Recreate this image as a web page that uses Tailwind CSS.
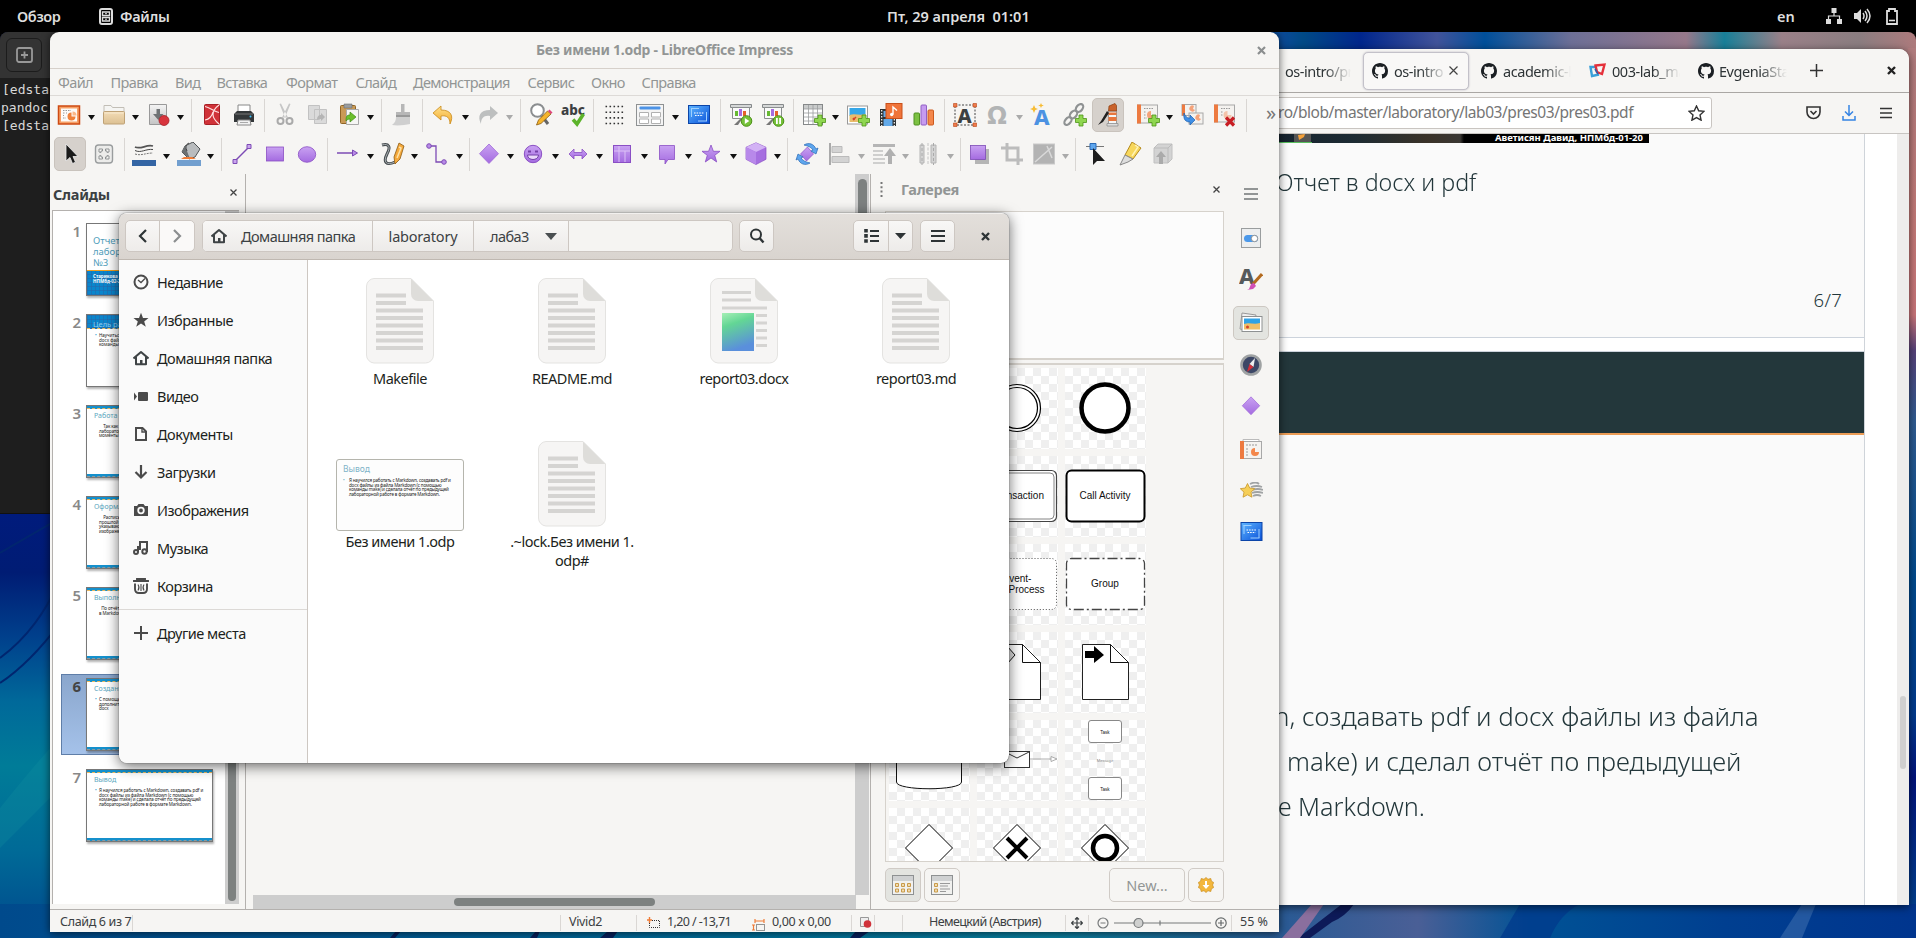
<!DOCTYPE html>
<html lang="ru">
<head>
<meta charset="utf-8">
<title>Desktop</title>
<script src="https://cdn.jsdelivr.net/npm/@tailwindcss/browser@4"></script>
</head>
<body class="relative w-[1916px] h-[938px] overflow-hidden bg-black font-['Noto_Sans',sans-serif] text-[14.5px] leading-none text-[#2e3436] whitespace-nowrap">

<svg class="absolute w-0 h-0">
  <defs>
    <linearGradient id="pu" x2="0" y2="1"><stop stop-color="#c9a2f2"/><stop offset="1" stop-color="#a46be0"/></linearGradient>
    <linearGradient id="ye" x2="0" y2="1"><stop stop-color="#ffe08a"/><stop offset="1" stop-color="#f2a92b"/></linearGradient>
    <linearGradient id="bl" x2="1" y2="1"><stop stop-color="#5db5ff"/><stop offset="1" stop-color="#0a50d8"/></linearGradient>
    <linearGradient id="gr" x2="0" y2="1"><stop stop-color="#f4f4f4"/><stop offset="1" stop-color="#c4c4c4"/></linearGradient>
    <linearGradient id="fo" x2="0" y2="1"><stop stop-color="#f3dcb6"/><stop offset="1" stop-color="#dcc092"/></linearGradient>
    <linearGradient id="doc" x2=".3" y2="1"><stop stop-color="#a5efb5"/><stop offset=".35" stop-color="#63d695"/><stop offset="1" stop-color="#5a8fdc"/></linearGradient>
  </defs>
  <symbol id="new" viewBox="0 0 24 24"><rect x="1.500" y="3" width="21" height="18" fill="#f6a067" stroke="#ce4a12" stroke-width="1.500"/><rect x="4" y="5.500" width="16" height="13" fill="#fdfbf8"/><path d="M6 7.500h8M6 10h2M6 12.500h1M6 15h3M9 10h1" stroke="#999" stroke-width="1.200" stroke-dasharray="1.500 1"/><path d="M14.500 9.500a4 4 0 1 0 4 4h-4z" fill="#f0813a"/><path d="M15.500 8.500v4h4a4 4 0 0 0-4-4z" fill="#fbb888"/></symbol>
  <symbol id="open" viewBox="0 0 24 24"><path d="M2 2.500h7l1.500 2H22v6H2z" fill="#f5f5f3" stroke="#c2beb6"/><rect x="1.500" y="8.500" width="21" height="12.500" rx="1" fill="url(#fo)" stroke="#bfa276"/><path d="M2.500 10h19" stroke="#f8ead0"/></symbol>
  <symbol id="save" viewBox="0 0 24 24"><path d="M3.500 1.500h17v20h-17z" fill="url(#gr)" stroke="#999"/><path d="M10.500 6h3.500v5h3.500l-5.200 6L7 11h3.500z" fill="#6f7375"/><circle cx="18" cy="17.500" r="5" fill="#d8343c" stroke="#a81f28" stroke-width=".8"/></symbol>
  <symbol id="pdf" viewBox="0 0 24 24"><rect x="4.500" y="1.500" width="15" height="20" rx="1" fill="#d03238" stroke="#a82026"/><path d="M5 3.500c5 1 9 5 14 6M19 2c-4 3-6 6-6 9.500s3 7 6 9.500M5 17c5-1 7-4 8-8" fill="none" stroke="#ffe3e3" stroke-width="1.100"/></symbol>
  <symbol id="print" viewBox="0 0 24 24"><path d="M6 2h12v8H6z" fill="#fff" stroke="#888"/><path d="M2 11l3-3h14l3 3v8H2z" fill="#333739"/><path d="M3 11h18" stroke="#777"/><circle cx="18.500" cy="13.500" r="1" fill="#3cc5ff"/><path d="M6 17h12l1 5H5z" fill="#f2f2f2" stroke="#888"/><path d="M8 19.500h8" stroke="#aaa"/></symbol>
  <symbol id="cut" viewBox="0 0 24 24"><path d="M6.500 1l1.500-.500 7 14h-3zM17.500 1L16 .5 9 14.500h3z" fill="#c6c6c6"/><circle cx="7.500" cy="18" r="3" fill="none" stroke="#aaa" stroke-width="2"/><circle cx="16.500" cy="18" r="3" fill="none" stroke="#aaa" stroke-width="2"/></symbol>
  <symbol id="copy" viewBox="0 0 24 24"><path d="M3.500 2.500h11v14h-11zM9.500 6.500h12v14h-12z" fill="#dadada" stroke="#c2c2c2"/><path d="M12 17c0-4 2-5 4-5v-2l4 4-4 4v-2c-2 0-3 0-4 1z" fill="#b5b5b5"/></symbol>
  <symbol id="paste" viewBox="0 0 24 24"><rect x="3.500" y="2.500" width="15" height="18" rx="1" fill="#c99a55" stroke="#8f6426"/><path d="M7 1h8v4H7z" fill="#999c9e" stroke="#6d7072" stroke-width=".6"/><path d="M9.500 6.500h12v15h-12z" fill="#f6f6f4" stroke="#a9a9a9"/><path d="M9 18c0-5 1-6 4-6V9l6 5-6 5v-3c-2 0-3 1-4 2z" fill="#6cc02c" stroke="#3f8c12" stroke-width=".7"/></symbol>
  <symbol id="brush" viewBox="0 0 24 24"><path d="M11 1h3.500v8H11zM6 9h14v5H6z" fill="#b7b7b7"/><path d="M6 14h14v7c-5 1-12 2-18 1 3-2 4-5 4-8z" fill="#cfcfcf"/><path d="M6 13h14" stroke="#8f8f8f" stroke-width="1.500"/></symbol>
  <symbol id="undo" viewBox="0 0 24 24"><path d="M10 3L2 10l8 7v-4c6-1 9 2 9 8 4-8 1-14-9-14z" fill="url(#ye)" stroke="#c98a1a" stroke-width=".8"/></symbol>
  <symbol id="redo" viewBox="0 0 24 24"><path d="M14 3l8 7-8 7v-4c-6-1-9 2-9 8-4-8-1-14 9-14z" fill="#bdbfbf"/></symbol>
  <symbol id="find" viewBox="0 0 24 24"><circle cx="8.500" cy="7.500" r="6.300" fill="#fff" stroke="#8b8e90" stroke-width="2"/><path d="M13 13l6 8" stroke="#666" stroke-width="3"/><path d="M7.500 22l2-5 9-9 3.500 3-10 9.500z" fill="#f5b42c" stroke="#8a5a10" stroke-width=".8"/><path d="M19 8l1.500-1.500 3 3-1.500 1.500z" fill="#e0457c"/></symbol>
  <symbol id="spell" viewBox="0 0 24 24"><text x="0" y="12" font-size="13.500" font-weight="800" font-family="Noto Sans" fill="#3c4042" textLength="24" lengthAdjust="spacingAndGlyphs">abc</text><path d="M12 16.500l4 4.500L22.500 11" fill="none" stroke="#5cb32a" stroke-width="3.500"/></symbol>
  <symbol id="dots" viewBox="0 0 24 24"><path d="M3.500 3.500h18M3.500 9.200h18M3.500 14.900h18M3.500 20.500h18" stroke="#333" stroke-width="1.600" stroke-dasharray="1.600 2.400"/></symbol>
  <symbol id="view" viewBox="0 0 30 24"><rect x="1.500" y="1.500" width="27" height="21" fill="#f4f4f4" stroke="#8e9192"/><rect x="4.500" y="3.500" width="21" height="3" rx="1" fill="#4c93e6"/><path d="M4.500 9.500h9v4.500h-9zM16.500 9.500h9v4.500h-9zM4.500 16h9v4.500h-9zM16.500 16h9v4.500h-9z" fill="#fff" stroke="#b0b0b0"/></symbol>
  <symbol id="master" viewBox="0 0 24 24"><rect x="1.500" y="2.500" width="21" height="18" fill="url(#bl)" stroke="#0c45a8"/><path d="M4 5.500h8M4.500 5v9M20 18h-9M19.500 18V9" stroke="#9fd1ff" fill="none"/><path d="M7 10h10M8 12.500h8" stroke="#fff" stroke-width="1.200" stroke-dasharray="1.600 1"/></symbol>
  <symbol id="play" viewBox="0 0 24 24"><path d="M1.500 1.500h21v3h-21z" fill="#d5d7d7" stroke="#85888a"/><path d="M3.500 4.500h17v11h-17z" fill="#fafafa" stroke="#8b8e8f"/><path d="M6 8h3v5H6z" fill="#67b933"/><path d="M10 6h3v7h-3z" fill="#a56de0"/><path d="M14 8h3v5h-3z" fill="#e5622b"/><path d="M11 16l-6 6h4l4-6z" fill="#777"/><circle cx="17.500" cy="18" r="5.300" fill="#75c138" stroke="#4b9017"/><path d="M15.800 15v6l4.500-3z" fill="#fff"/></symbol>
  <symbol id="pause" viewBox="0 0 24 24"><path d="M1.500 1.500h21v3h-21z" fill="#d5d7d7" stroke="#85888a"/><path d="M3.500 4.500h17v11h-17z" fill="#fafafa" stroke="#8b8e8f"/><path d="M6 8h3v5H6z" fill="#67b933"/><path d="M10 6h3v7h-3z" fill="#a56de0"/><path d="M14 8h3v5h-3z" fill="#e5622b"/><path d="M11 16l-6 6h4l4-6z" fill="#777"/><circle cx="17.500" cy="18" r="5.300" fill="#75c138" stroke="#4b9017"/><path d="M15 15h1.800v6H15zM18.200 15H20v6h-1.800z" fill="#fff"/></symbol>
  <symbol id="plus" viewBox="0 0 24 24"><path d="M16 12h4v3.500h3.500v4H20V23h-4v-3.500h-3.500v-4H16z" fill="#8fd650" stroke="#4c9416" stroke-width=".8"/></symbol>
  <symbol id="table" viewBox="0 0 24 24"><rect x="1.500" y="1.500" width="19" height="20" fill="#fff" stroke="#858889"/><path d="M2 2h18v4H2z" fill="#c9cbcb"/><path d="M2 6h18M2 10h18M2 14h18M2 18h18M6.500 2v19M11 2v19M15.500 2v19" stroke="#9a9d9e" stroke-width=".8"/><use href="#plus"/></symbol>
  <symbol id="image" viewBox="0 0 24 24"><rect x="1.500" y="3" width="20" height="18" fill="#fff" stroke="#999"/><path d="M3.500 5h16v8h-16z" fill="#35a7e8"/><path d="M3.500 12c5-2 10 1 16-1v8h-16z" fill="#e9bd6b"/><path d="M7 15l1.500 2M10 14l-3 3" stroke="#d4432a" stroke-width="1.500"/><use href="#plus"/></symbol>
  <symbol id="media" viewBox="0 0 24 24"><path d="M1 6h16v17H1z" fill="#2e3234"/><path d="M4.500 8h9v6h-9zM4.500 16h9v7h-9z" fill="#62a9e8"/><path d="M2.700 7v16M15.300 7v16" stroke="#fff" stroke-width="1.200" stroke-dasharray="1.500 1.500"/><rect x="7" y=".5" width="16" height="15" fill="#f0743a" stroke="#c9501b"/><path d="M14 11.500V4l4 3.500" stroke="#fff" fill="none" stroke-width="1.400"/><circle cx="12.700" cy="11.500" r="1.700" fill="#fff"/></symbol>
  <symbol id="chart" viewBox="0 0 24 24"><rect x="2" y="10" width="5.500" height="12" rx="1" fill="#7cc142" stroke="#4f9020"/><rect x="9" y="2" width="5.500" height="20" rx="1" fill="#c69bf0" stroke="#9160c4"/><rect x="16" y="7" width="5.500" height="15" rx="1" fill="#f4874b" stroke="#cc5a1f"/></symbol>
  <symbol id="textbox" viewBox="0 0 24 24"><rect x="2" y="2" width="20" height="20" fill="none" stroke="#444" stroke-dasharray="2 1.500"/><text x="4.500" y="19.500" font-size="20" font-weight="800" font-family="Noto Sans" fill="#3c4042">A</text><path d="M.5.500h3.500v3.500H.5zM20 .5h3.500v3.500H20zM.5 20h3.500v3.500H.5zM20 20h3.500v3.500H20z" fill="#ef7c4c" stroke="#b84417" stroke-width=".6"/></symbol>
  <symbol id="omega" viewBox="0 0 24 24"><text x="2" y="21" font-size="25" font-weight="800" font-family="Noto Sans" fill="#b2b4b5" textLength="20" lengthAdjust="spacingAndGlyphs">Ω</text></symbol>
  <symbol id="fontwork" viewBox="0 0 24 24"><text x="4" y="21.500" font-size="22" font-weight="800" font-family="Noto Sans" fill="#4c92e2">A</text><path d="M4 2l1.300 3L8 6 5.300 7 4 10 2.700 7 0 6l2.700-1zM11 0l.8 1.800 2 .7-2 .7L11 5l-.8-1.800-2-.7 2-.7z" fill="#f7bc34"/></symbol>
  <symbol id="link" viewBox="0 0 24 24"><g fill="none" stroke="#8f9293" stroke-width="2.200"><ellipse cx="16.500" cy="5" rx="3" ry="4.500" transform="rotate(40 16.500 5)"/><ellipse cx="10.500" cy="11.500" rx="3" ry="4.500" transform="rotate(40 10.500 11.500)"/><ellipse cx="5" cy="18" rx="2.800" ry="4.500" transform="rotate(40 5 18)"/></g><use href="#plus"/></symbol>
  <symbol id="draw" viewBox="0 0 24 24"><path d="M12.500 8h8v13h-8z" fill="#f5f5f5" stroke="#9a9a9a"/><path d="M12.500 9.500h8V12h-8zM12.500 14h8v4h-8z" fill="#e8763c"/><path d="M13 3l6-2.500 1.500 2V8h-8z" fill="#c9622c" stroke="#8a3d10" stroke-width=".7"/><path d="M11 8l-6 10-3 4 5-3 6-9z" fill="#222"/><path d="M11 20.500h11V23H11z" fill="#ddd" stroke="#888" stroke-width=".7"/></symbol>
  <symbol id="newslide" viewBox="0 0 24 24"><rect x="1.500" y="2" width="20" height="18" fill="#f4f2ef" stroke="#a8a8a8"/><path d="M1 1.500h4v19H1z" fill="#ed7a40"/><path d="M8 5.500h10M8 9h2M8 12h2M8 15h3" stroke="#999" stroke-dasharray="1.500 1"/><path d="M15 8a4 4 0 1 0 4 4h-4z" fill="#f4a27a"/><use href="#plus"/></symbol>
  <symbol id="dup" viewBox="0 0 24 24"><rect x="2" y="1.500" width="14" height="11" fill="#f4f2ef" stroke="#a8a8a8"/><path d="M2 1.500h3v11H2z" fill="#ed7a40"/><rect x="9" y="10" width="14" height="11" fill="#f4f2ef" stroke="#a8a8a8"/><path d="M14 3a3 3 0 1 0 1 4l-2-1zM20 12a3 3 0 1 0 1 4l-2-1z" fill="#f4a27a"/><path d="M4 10c-1 7 2 9 6 9v3l5-5-5-5v3c-2 0-4 0-6-5z" fill="#3f8fe6" stroke="#1d5fae" stroke-width=".7"/></symbol>
  <symbol id="del" viewBox="0 0 24 24"><rect x="1.500" y="2" width="20" height="17" fill="#f4f2ef" stroke="#a8a8a8"/><path d="M1 1.500h4v18H1z" fill="#ed7a40"/><path d="M8 5.500h10M8 9h2M8 12h2" stroke="#999" stroke-dasharray="1.500 1"/><path d="M14.500 8a4 4 0 1 0 4 4h-4z" fill="#f4c4aa"/><path d="M13 14.500l8 8M21 14.500l-8 8" stroke="#c81e24" stroke-width="3.200"/></symbol>
  <symbol id="pointer" viewBox="0 0 24 24"><path d="M8 2v17l4-3.500 2.500 6 3-1.300L15 14.500h5z" fill="#1a1a1a" stroke="#eee" stroke-width=".8"/></symbol>
  <symbol id="fit" viewBox="0 0 24 24"><rect x="3.500" y="3" width="17" height="18" rx="3" fill="#ececea" stroke="#9a9d9e" stroke-width="1.400"/><path d="M7 10V7h3.500v2H9v1.500zM17 10V7h-3.500v2H15v1.500zM7 14v3h3.500v-2H9v-1.500zM17 14v3h-3.500v-2H15v-1.500z" fill="#f6f6f4" stroke="#8f9293" stroke-width="1"/></symbol>
  <symbol id="lines" viewBox="0 0 24 24"><path d="M3 5c6 3 11-3 18-1" stroke="#555" fill="none" stroke-width="1.800"/><path d="M3 8.500c6 3 11-2 18-1" stroke="#444" fill="none" stroke-width="1"/><path d="M3 12c6 2 11-1 18-1" stroke="#777" fill="none" stroke-dasharray="2 1"/><path d="M0 18h24v6H0z" fill="#3465a4"/></symbol>
  <symbol id="fill" viewBox="0 0 24 24"><path d="M8 4l8-4 7 7-5 8-6 2-7-7z" fill="#b9bcbe" stroke="#4f5355"/><path d="M8 4l5 13-8-7z" fill="#6b6f71"/><path d="M12 1q-5 2-2 8" stroke="#444" fill="none"/><path d="M5 9l2 6h8l4 2H4l3-2z" fill="#ef7c37"/><path d="M0 18h24v6H0z" fill="#729fcf"/></symbol>
  <symbol id="line" viewBox="0 0 24 24"><path d="M4 20L20 4" stroke="#7d4bb5" stroke-width="1.400"/><path d="M3 17.500h4v4H3zM17 2.500h4v4h-4z" fill="#caa5ee" stroke="#7d4bb5"/></symbol>
  <symbol id="rect" viewBox="0 0 24 24"><rect x="3.500" y="5" width="17" height="14" fill="url(#pu)" stroke="#8a4fc4" stroke-width=".8"/></symbol>
  <symbol id="ell" viewBox="0 0 24 24"><ellipse cx="12" cy="12.500" rx="8.700" ry="7.800" fill="url(#pu)" stroke="#8a4fc4" stroke-width=".8"/></symbol>
  <symbol id="arrowl" viewBox="0 0 24 24"><path d="M1 11h16" stroke="#7d4bb5" stroke-width="1.400"/><path d="M16.500 8l5 3-5 3z" fill="#b98be8" stroke="#7d4bb5"/></symbol>
  <symbol id="curve" viewBox="0 0 24 24"><path d="M1 3c7-2 9 2 5 9-4 8-1 12 8 8" fill="none" stroke="#454b4e" stroke-width="3"/><path d="M1 3c7-2 9 2 5 9-4 8-1 12 8 8" fill="none" stroke="#aab0b3" stroke-width="1"/><path d="M14 22l-1-7 5-14 5 3-4 13z" fill="#f5a93b" stroke="#8c5a14" stroke-width=".8"/><path d="M18 5l2 1-4 10" stroke="#fde1a6" fill="none" stroke-width="1.500"/></symbol>
  <symbol id="conn" viewBox="0 0 24 24"><path d="M4 4h7v16h8" stroke="#7d4bb5" fill="none" stroke-width="1.300"/><circle cx="4" cy="4" r="2.300" fill="#b98be8" stroke="#7d4bb5"/><circle cx="19" cy="20" r="2.300" fill="#b98be8" stroke="#7d4bb5"/></symbol>
  <symbol id="dia" viewBox="0 0 24 24"><path d="M12 2L21.500 11.700 12 21.500 2.500 11.700z" fill="url(#pu)" stroke="#a06ad8" stroke-width=".8"/></symbol>
  <symbol id="smile" viewBox="0 0 24 24"><circle cx="12" cy="12" r="8.700" fill="url(#pu)" stroke="#8a4fc4"/><path d="M7 8.500h3v2H7zM14 8.500h3v2h-3z" fill="#7440a8"/><path d="M6.500 13h11c0 6-11 6-11 0z" fill="#e9d8fa" stroke="#7440a8"/></symbol>
  <symbol id="dbl" viewBox="0 0 24 24"><path d="M3 12l5-5v3.500h8V7l5 5-5 5v-3.500H8V17z" fill="url(#pu)" stroke="#8a4fc4" stroke-width=".8"/></symbol>
  <symbol id="flow" viewBox="0 0 24 24"><rect x="3.500" y="3.500" width="17" height="17" fill="url(#pu)" stroke="#8a4fc4"/><path d="M9 4v16M4 9h16M15 9v11" stroke="#dcc2f6"/></symbol>
  <symbol id="call" viewBox="0 0 24 24"><path d="M4.500 3.500h15v14H13l-3 4.500v-4.500H4.500z" fill="url(#pu)" stroke="#8a4fc4" stroke-width=".8"/></symbol>
  <symbol id="star" viewBox="0 0 24 24"><path d="M12 3l2.400 6.300h6.600l-5.300 4 2 6.700L12 16l-5.700 4 2-6.700-5.300-4h6.600z" fill="url(#pu)" stroke="#8a4fc4" stroke-width=".8"/></symbol>
  <symbol id="cube" viewBox="0 0 24 24"><path d="M12 .8l10 4.500v12L12 22.500 2 17.300v-12z" fill="#a66fe0" stroke="#8a4fc4" stroke-width=".7"/><path d="M12 .8l10 4.500L12 10 2 5.300z" fill="#d3b2f5"/><path d="M12 10v12.500L2 17.300v-12z" fill="#b889ea"/></symbol>
  <symbol id="rot" viewBox="0 0 24 24"><path d="M12.500 5l6 7-7 7-6-7z" fill="url(#pu)" stroke="#8a4fc4" stroke-width=".7"/><path d="M9 3c5-3 10-1 12 4l2-1-2 6-5-3 2-1c-2-3-5-4-9-5zM15 21c-5 3-10 1-12-4l-2 1 2-6 5 3-2 1c2 3 5 4 9 5z" fill="#5ea6ee" stroke="#2a6ab6" stroke-width=".7"/></symbol>
  <symbol id="align" viewBox="0 0 24 24"><path d="M3 1v22" stroke="#aaa" stroke-width="2"/><path d="M5 4.500h10v6H5zM5 14.500h17v6H5z" fill="#d3d3d3" stroke="#bbb"/></symbol>
  <symbol id="arr2" viewBox="0 0 24 24"><path d="M1 2h22v3H1z" fill="#b5b5b5"/><path d="M1 9h10M1 13h10M1 17h12M1 21h12" stroke="#c2c2c2" stroke-width="1.600"/><path d="M18 6l6 8h-4v8h-4v-8h-4z" fill="#b0b0b0"/></symbol>
  <symbol id="dist" viewBox="0 0 24 24"><path d="M12 1v22" stroke="#c4c4c4" stroke-dasharray="3 1.500"/><path d="M4 3h4v18H4zM15 3h5v18h-5z" fill="#d3d3d3" stroke="#b5b5b5"/><path d="M6 1v22M17.500 1v22" stroke="#aaa" stroke-dasharray="3 2"/></symbol>
  <symbol id="shadow" viewBox="0 0 24 24"><path d="M7 7h14v15H7z" fill="#b5b5b5"/><rect x="2.500" y="3.500" width="15" height="14" fill="url(#pu)" stroke="#7d4bb5" stroke-width=".8"/></symbol>
  <symbol id="crop" viewBox="0 0 24 24"><path d="M7 1v17h16M1 6h17v17" fill="none" stroke="#bcbcbc" stroke-width="3"/></symbol>
  <symbol id="filter" viewBox="0 0 24 24"><rect x="1.500" y="2" width="21" height="20" fill="#b3b3b3" stroke="#c9c9c9"/><path d="M3 20L20 5M15 4l5 12" stroke="#d9d9d9" stroke-width="1.500"/></symbol>
  <symbol id="points" viewBox="0 0 24 24"><path d="M2 4.500h18" stroke="#777" stroke-width="1.200"/><path d="M6 1.500h6v6H6z" fill="#5ea6ee" stroke="#2a6ab6"/><path d="M9 6v17l4-4h8z" fill="#1d1d1d"/></symbol>
  <symbol id="glue" viewBox="0 0 24 24"><path d="M14 0l9 6-8 11-8-4z" fill="#f7d75c" stroke="#b58a1d"/><path d="M17 3l3 2-6 9" stroke="#fff2b4" fill="none" stroke-width="1.500"/><path d="M7 13l8 4-5 3-8 3z" fill="#ddd" stroke="#888"/></symbol>
  <symbol id="extr" viewBox="0 0 24 24"><path d="M3 6l4-4h14v15l-4 4H3z" fill="#d3d3d3" stroke="#c0c0c0"/><path d="M3 6h14v15M17 6l4-4" fill="none" stroke="#bbb"/><path d="M10 9l5 6h-3v7H8v-7H5z" fill="#aaa"/></symbol>

  <symbol id="git" viewBox="0 0 16 16"><path d="M8 0C3.580 0 0 3.580 0 8c0 3.540 2.290 6.530 5.470 7.590.4.070.55-.17.55-.38 0-.19-.01-.82-.01-1.490-2.010.37-2.530-.49-2.690-.94-.09-.23-.48-.94-.82-1.130-.28-.15-.68-.52-.01-.53.63-.01 1.080.58 1.230.82.72 1.210 1.870.87 2.330.66.070-.52.28-.87.51-1.070-1.780-.2-3.640-.89-3.640-3.950 0-.87.31-1.590.82-2.150-.08-.2-.36-1.020.08-2.120 0 0 .67-.21 2.200.82.64-.18 1.320-.27 2-.27s1.360.09 2 .27c1.530-1.040 2.200-.82 2.200-.82.44 1.100.16 1.920.08 2.120.51.56.82 1.270.82 2.150 0 3.070-1.870 3.750-3.650 3.950.29.25.54.73.54 1.480 0 1.070-.01 1.930-.01 2.200 0 .21.15.46.55.38A8.010 8.010 0 0 0 16 8c0-4.420-3.580-8-8-8z" fill="#1b1f23"/></symbol>
  <symbol id="file" viewBox="0 0 68 86"><path d="M8 .5h37L67.500 23v54a8 8 0 0 1-8 8H8a8 8 0 0 1-7.500-8V8A8 8 0 0 1 8 .5z" fill="#f6f5f4" stroke="#e4e3e1"/><path d="M45 .5L67.500 23H52a7 7 0 0 1-7-7z" fill="#deddda"/></symbol>
  <symbol id="txt" viewBox="0 0 68 86"><use href="#file"/><path d="M10 17.500h30M10 25h30M10 32.500h47M10 40h47M10 47.500h47M10 55h47M10 62.500h47M10 70h47" stroke="#d5d4d2" stroke-width="4"/></symbol>
  <symbol id="home" viewBox="0 0 16 16"><path d="M.5 8.500L8 2l7.500 6.500M3 7v7.200h10V7" fill="none" stroke="#3e4345" stroke-width="2" stroke-linejoin="round"/><path d="M7 10h2.500v4H7z" fill="#3e4345"/></symbol>
</svg>

<!-- wallpaper -->
<div class="absolute inset-x-0 top-8 bottom-0 rounded-t-lg bg-[linear-gradient(90deg,#00186f_0%,#005a96_30%,#0a4a96_67%,#004a86_68%,#00268c_71%,#41539a_75%,#004f9a_77.5%,#6d6f96_82%,#96788a_88%,#187f98_90%,#9a8088_93%,#8a7d80_97%,#ad7a7c_100%)] overflow-hidden">
  <svg class="absolute left-0 bottom-0" width="60" height="430"><defs><linearGradient id="lw" x2="0" y2="1"><stop stop-color="#001b7d"/><stop offset=".15" stop-color="#001c74"/><stop offset=".3" stop-color="#00408c"/><stop offset=".45" stop-color="#00699a"/><stop offset=".6" stop-color="#007c98"/><stop offset=".8" stop-color="#006a97"/><stop offset="1" stop-color="#00488c"/></linearGradient></defs><rect width="60" height="430" fill="url(#lw)"/><path d="M0 150Q40 120 60 70M0 175Q30 155 60 115M0 45L60 10" stroke="#00266f" fill="none" stroke-width="2"/><path d="M0 300Q40 250 60 230v50Q30 310 0 340z" fill="#1090a0" opacity=".3"/></svg>
  <div class="absolute right-0 top-4 bottom-0 w-2 bg-[linear-gradient(180deg,#b07c7e_0%,#c47a78_20%,#c9757a_30%,#56427a_34%,#2f5c92_42%,#004a8e_60%,#003a8e_75%,#00137c_82%,#004a93_100%)]"></div>
  <svg class="absolute left-0 bottom-0" width="1916" height="34"><defs><linearGradient id="bw"><stop stop-color="#004a8c"/><stop offset=".2" stop-color="#005a94"/><stop offset=".4" stop-color="#00709a"/><stop offset=".55" stop-color="#0a7f9e"/><stop offset=".67" stop-color="#2a5a94"/><stop offset=".74" stop-color="#4a5f96"/><stop offset=".8" stop-color="#005295"/><stop offset=".9" stop-color="#003f90"/><stop offset="1" stop-color="#00358e"/></linearGradient></defs><rect width="1916" height="34" fill="url(#bw)"/><path d="M1342 0h12q-8 12-22 18l-22 16h-12z" fill="#0d1a58"/><path d="M1282 34l30-34h12l-24 34z" fill="#8a6f9e"/><path d="M1500 34l20-34h60q-20 10-30 34z" fill="#00388c" opacity=".7"/><path d="M1780 34l22-34h14l-14 34z" fill="#3a6cae" opacity=".6"/><path d="M390 34l6-7h5l-6 7zM530 34l6-7h4l-3 7zM850 34l6-7h14l-10 7zM600 34l8-7h10l-5 7z" fill="#07205c"/></svg>
</div>

<!-- top panel -->
<header class="absolute inset-x-0 top-0 h-8 bg-black text-[#dedede] font-semibold text-[14.5px] flex items-center">
  <span class="ml-[17px] w-[44px] tracking-[-0.350px]">Обзор</span>
  <svg class="ml-[38px] mr-[7px]" width="14" height="17" viewBox="0 0 14 17"><rect x="1" y="1" width="12" height="15" rx="2" fill="none" stroke="#ddd" stroke-width="2"/><path d="M3.500 4h7v3.500h-7zM3.500 9.500h7V13h-7z" fill="none" stroke="#ddd" stroke-width="1.400"/><path d="M6 5.700h2M6 11.200h2" stroke="#ddd"/></svg>
  <span class="tracking-[-0.350px]">Файлы</span>
  <span class="ml-auto w-[890px]">Пт, 29 апреля&nbsp; 01:01</span>
  <span class="w-[49px]">en</span>
  <svg class="mr-3" width="16" height="16" viewBox="0 0 16 16" fill="#ddd"><path d="M5.500 0h5v5h-5zM0 11h5v5H0zM11 11h5v5h-5z"/><path d="M8 5v3M2.500 11V8h11v3" fill="none" stroke="#ddd" stroke-width="1.200"/></svg>
  <svg class="mr-[15px]" width="17" height="16" viewBox="0 0 17 16"><path d="M0 5h3l4-4v14l-4-4H0z" fill="#ddd"/><path d="M9 5q2 3 0 6M11 3q4 5 0 10M13 1q6 7 0 14" fill="none" stroke="#ddd" stroke-width="1.500"/></svg>
  <svg class="mr-[18px]" width="12" height="17" viewBox="0 0 12 17"><path d="M1 3h2V1h6v2h2v13H1z" fill="none" stroke="#ddd" stroke-width="1.800"/><path d="M3 12.500h6" stroke="#ddd" stroke-width="1.600"/></svg>
</header>

<!-- terminal -->
<section class="absolute left-0 top-8 w-[60px] h-[482px] bg-[#1e1e1e] rounded-tl-lg border-b border-[#111]">
  <div class="h-[46px] bg-[#333] pl-[6px] pt-[6px] rounded-tl-lg"><div class="w-9 h-[34px] rounded-md border border-[#1c1c1c] bg-[#343434] flex items-center justify-center"><svg width="17" height="16" viewBox="0 0 17 16" fill="none" stroke="#999" stroke-width="1.800"><rect x="1" y="1" width="15" height="14" rx="2"/><path d="M8.500 4.500v7M5 8h7"/></svg></div></div>
  <div class="pt-[3px] text-[13px] leading-[18px] text-[#d8d8d8] font-['DejaVu_Sans_Mono',monospace]"><div class="pl-[2px]">[edsta</div><div class="pl-px">pandoc</div><div class="pl-[2px]">[edsta</div></div>
</section>

<!-- browser -->
<section class="absolute left-[1200px] top-[49px] w-[709px] h-[856px] bg-white rounded-t-[10px] overflow-hidden shadow-[0_2px_8px_rgba(0,0,0,.6)] flex flex-col">
  <div class="h-[44px] shrink-0 bg-[#f6f5f3] border-b border-[#aaa7a4] flex items-center text-[14.500px] tracking-[-0.450px] pl-[85px]">
    <span class="w-[66px] overflow-hidden mask-r-from-60% leading-5">os-intro/pr</span>
    <div class="ml-3 w-[106px] h-[38px] rounded-[5px] border border-[#c3c1c9] shadow-[0_0_2px_#b5b3bd] bg-[#f9f8f7] flex items-center pl-2">
      <svg class="w-4 h-4 mr-[6px]"><use href="#git"/></svg><span class="w-[53px] overflow-hidden mask-r-from-50% leading-5">os-intro</span>
      <svg class="ml-[2px]" width="9" height="9" stroke="#444" stroke-width="1.200"><path d="M.5.500l8 8M8.500.500l-8 8"/></svg>
    </div>
    <svg class="w-4 h-4 ml-[12px] mr-[6px]"><use href="#git"/></svg><span class="w-[68px] overflow-hidden mask-r-from-60% leading-5">academic-l</span>
    <svg class="ml-[18px] mr-[6px]" width="17" height="16" viewBox="0 0 17 16" fill="none"><path d="M8 4L1.500 4l1.500 9 7-1.500" stroke="#3a9fd8" stroke-width="2.400"/><path d="M6.500 2.500l9-1-2.500 9.500-5-2z" stroke="#e5303a" stroke-width="2.400"/><path d="M6 6l3 5" stroke="#2f5fa8" stroke-width="1.500"/></svg><span class="w-[68px] overflow-hidden mask-r-from-60% leading-5">003-lab_mar</span>
    <svg class="w-4 h-4 ml-[18px] mr-[5px]"><use href="#git"/></svg><span class="w-[68px] overflow-hidden mask-r-from-60% leading-5">EvgeniaSta</span>
    <svg class="ml-[23px]" width="13" height="13" stroke="#333" stroke-width="1.500"><path d="M6.500 0v13M0 6.500h13"/></svg>
    <svg class="ml-[64px]" width="9" height="9" stroke="#222" stroke-width="2.400"><path d="M1 1l7 7M8 1l-7 7"/></svg>
  </div>
  <div class="h-[41px] shrink-0 bg-[#f6f5f3] border-b border-[#c8c5c2] flex items-center">
    <div class="w-[512px] h-[32px] rounded-[3px] border border-[#c9c5c1] bg-white flex items-center pl-[77px] text-[15.500px] text-[#757575]">
      <span class="tracking-[-0.450px] w-[410px]">ro/blob/master/laboratory/lab03/pres03/pres03.pdf</span>
      <svg width="17" height="16" viewBox="0 0 17 16" fill="none" stroke="#333" stroke-width="1.400"><path d="M8.500 1l2.200 4.800 5.200.6-3.900 3.600 1.100 5.200-4.600-2.600-4.600 2.600L5 10 1.100 6.400l5.200-.6z"/></svg>
    </div>
    <svg class="ml-[94px]" width="15" height="14" viewBox="0 0 15 14" fill="none" stroke="#333" stroke-width="1.600"><path d="M1 1h13v5a6.500 6.500 0 0 1-13 0zM4.500 5l3 3 3-3"/></svg>
    <svg class="ml-[21px]" width="14" height="16" viewBox="0 0 14 16" fill="none" stroke="#3584e4" stroke-width="1.500"><path d="M7 0v10M3 6.500l4 4 4-4M1 11v4h12v-4"/></svg>
    <svg class="ml-[24px]" width="12" height="12" stroke="#333" stroke-width="1.600"><path d="M0 1.500h12M0 6h12M0 10.500h12"/></svg>
  </div>
  <div class="flex-1 flex text-[#23373b] font-light">
    <div class="w-[665px] border-r border-[#cfd4da] bg-[#fafafa] flex flex-col pl-[79px]">
      <div class="h-[9px] w-[370px] bg-[linear-gradient(90deg,#17232e_0%,#1d2b33_20%,#3a3228_40%,#3a3733_49%,#000_50%,#000_100%)] flex justify-end overflow-hidden relative"><div class="absolute left-0 bottom-0 w-[33px] h-px bg-[#58c05e]"></div><div class="absolute left-[15px] top-0 w-[17px] h-2 bg-[#555]"></div><svg class="absolute left-[18px] top-0" width="10" height="7"><path d="M1 1l7-1-1 3-5 3" fill="#f3a03a"/></svg><span class="text-white font-bold text-[9.500px] leading-[8px] mr-[6px]">Аветисян Давид, НПМбд-01-20</span></div>
      <div class="mt-[19px] h-[40px] leading-[40px] w-max text-[24.500px] -ml-[3px] origin-left scale-x-[0.950]">Отчет в docx и pdf</div>
      <div class="mt-[85px] h-[26px] pr-[22px] text-right text-[18.500px] leading-[26px] tracking-[.3px]">6/7</div>
      <div class="mt-[24px] h-[15px] -ml-[79px] bg-white border-y border-[#ccd3dc]"></div>
      <div class="h-[83px] -ml-[79px] bg-[#23373b] border-b-2 border-[#eb9c56]"></div>
      <div class="mt-[259px] text-[26.500px] leading-[45px]">
        <div class="w-max -ml-[5px] origin-left scale-x-[0.978]">n, создавать pdf и docx файлы из файла</div>
        <div class="w-max ml-[8px] origin-left scale-x-[0.968]">make) и сделал отчёт по предыдущей</div>
        <div class="w-max -ml-[1px] origin-left scale-x-[0.950]">е Markdown.</div>
      </div>
    </div>
    <div class="w-8 bg-white"></div>
    <div class="w-3 bg-[#eeedec] pt-[562px] pl-[3px]"><div class="w-[6px] h-[73px] rounded-full bg-[#cfcfcf]"></div></div>
  </div>
</section>

<!-- impress -->
<section class="absolute left-[50px] top-8 w-[1229px] h-[900px] bg-[#f6f5f3] rounded-t-[9px] shadow-[0_1px_9px_rgba(0,0,0,.65)] flex flex-col overflow-hidden">
  <div class="h-[37px] shrink-0 border-b border-[#d6d0ca] flex items-center text-[#929595] font-bold text-[14px]">
    <span class="flex-1 pl-[486px] tracking-[-0.260px]">Без имени 1.odp - LibreOffice Impress</span>
    <svg class="mr-[13px]" width="9" height="9" stroke="#8b8e8f" stroke-width="2.200"><path d="M1 1l7 7M8 1l-7 7"/></svg>
  </div>
  <nav class="h-[27px] shrink-0 border-b border-[#dddad7] flex items-center pl-[8px] gap-[16.500px] text-[#929595] text-[14.500px] tracking-[-0.620px]">
    <span class="w-9">Файл</span><span class="w-[48px]">Правка</span><span class="w-[25px]">Вид</span><span class="w-[53px]">Вставка</span><span class="w-[53px]">Формат</span><span class="w-[41px]">Слайд</span><span class="w-[98px]">Демонстрация</span><span class="w-[47px]">Сервис</span><span class="w-[34px]">Окно</span><span>Справка</span>
  </nav>
  <div id="tb1" class="h-[38px] shrink-0 flex items-center pl-[3px]"></div>
  <div id="tb2" class="h-[40px] shrink-0 flex items-center pl-[4px]"></div>

  <div class="flex-1 flex min-h-0">
    <!-- slide list -->
    <aside class="w-[196px] border-r border-[#b4b1ae] flex flex-col">
      <div class="h-[36px] flex items-center pl-[3px] pr-[8px] justify-between font-bold text-[14.500px] text-[#3b4042]"><span class="tracking-[-0.280px] pt-1">Слайды</span><svg width="7" height="7" stroke="#444" stroke-width="1.300"><path d="M.5.500l6 6M6.500.500l-6 6"/></svg></div>
      <div class="ml-[2px] w-[187px] h-[694px] bg-white border-t border-l border-[#b4b1ae] flex justify-between">
        <div id="slides" class="pt-[8px] flex flex-col gap-[10px] pl-[8px]"></div>
        <div class="w-[14px] bg-[#cdcdcd] flex justify-center items-end pb-[3px]"><div class="w-2 h-[600px] rounded-full bg-[#7d8180]"></div></div>
      </div>
    </aside>
    <!-- canvas -->
    <main class="w-[624px] flex flex-col">
      <div class="h-[721px] flex justify-end pr-px"><div class="w-[14px] bg-[#cdcdcd] flex justify-center pt-[5px]"><div class="w-[9px] h-[360px] rounded-full bg-[#7d8180]"></div></div></div>
      <div class="ml-[7px] w-[603px] h-[14px] bg-[#cdcdcd] flex items-center pl-[201px]"><div class="w-[201px] h-2 rounded-full bg-[#7d8180]"></div></div>
    </main>
    <!-- gallery -->
    <aside class="flex-1 border-l border-[#b4b1ae] flex">
      <div class="w-[353px] pl-[14px]">
        <div class="h-[37px] -ml-[5px] flex items-center pb-[6px] text-[#929595] font-bold text-[14.500px]"><svg width="3" height="15"><path d="M1.500 0v15" stroke="#777" stroke-width="2" stroke-dasharray="2 2.300"/></svg><span class="ml-[18px] flex-1 tracking-[-0.300px]">Галерея</span><svg class="mr-[4px]" width="7" height="7" stroke="#444" stroke-width="1.300"><path d="M.5.500l6 6M6.500.500l-6 6"/></svg></div>
        <div class="h-[149px] border border-b-2 border-[#d6d2cc] bg-[#fcfcfc]"></div>
        <div class="mt-[3px] h-[499px] border border-t-2 border-[#d6d2cc] overflow-hidden pt-[3px] pl-[3px]">
          <div id="cells" class="grid grid-cols-[81px_81px_81px] auto-rows-[81px] gap-[7px]"></div>
        </div>
        <div class="mt-[6px] flex h-[34px] text-[#929595]">
          <div class="w-9 border border-[#d0cbc6] rounded-[5px] bg-[#e3e4e0] flex items-center justify-center"><svg width="22" height="20" viewBox="0 0 22 20"><rect x=".5" y=".5" width="21" height="19" fill="#f1f1ef" stroke="#8e9192"/><path d="M1 1h20v5H1z" fill="#cfd1d2"/><path d="M3.500 8.500h3v3h-3zM9.500 8.500h3v3h-3zM15.500 8.500h3v3h-3zM3.500 14h3v3h-3zM9.500 14h3v3h-3zM15.500 14h3v3h-3z" fill="#f2dcae" stroke="#c89a4a"/></svg></div>
          <div class="ml-[3px] w-9 border border-[#d0cbc6] rounded-[5px] flex items-center justify-center"><svg width="22" height="20" viewBox="0 0 22 20"><rect x=".5" y=".5" width="21" height="19" fill="#f1f1ef" stroke="#8e9192"/><path d="M1 1h20v5H1z" fill="#cfd1d2"/><path d="M3.500 8.500h3v3h-3zM3.500 14h3v3h-3z" fill="#f2dcae" stroke="#c89a4a"/><path d="M9 8.500h10M9 11h8M9 14h10M9 16.500h6" stroke="#999"/></svg></div>
          <div class="ml-auto w-[76px] border border-[#d0cbc6] rounded-[5px] flex items-center justify-center text-[14.5px]">New...</div>
          <div class="ml-[3px] w-9 border border-[#d0cbc6] rounded-[5px] flex items-center justify-center"><svg width="16" height="16" viewBox="0 0 16 16"><path d="M8 .5l2 1.800 2.800-.8.600 2.700 2.300 1.300L14.500 8l1.200 2.500-2.300 1.300-.6 2.700-2.800-.8-2 1.800-2-1.800-2.800.8-.6-2.700L.3 10.500 1.500 8 .3 5.500l2.300-1.300.6-2.700 2.800.8z" fill="#f3b73c" stroke="#c98c1d" stroke-width=".7"/><path d="M7 4h2v4h2.500L8 12 4.500 8H7z" fill="#fff"/></svg></div>
        </div>
      </div>
      <div class="flex-1 flex flex-col items-center pr-px pt-[14px]">
        <svg width="14" height="12" stroke="#929595" stroke-width="2"><path d="M0 1h14M0 6h14M0 11h14"/></svg>
        <svg class="mt-[28px]" width="20" height="20" viewBox="0 0 20 20"><rect x=".5" y=".5" width="19" height="19" fill="#eceeef" stroke="#9a9d9e"/><rect x="3" y="7" width="14" height="7" rx="3.500" fill="#4a98ea"/><circle cx="13.500" cy="10.500" r="3.200" fill="#fff" stroke="#8e9192"/></svg>
        <svg class="mt-[19px]" width="24" height="24" viewBox="0 0 24 24"><text x="0" y="17" font-size="22" font-weight="800" font-family="Noto Sans" fill="#55595b">A</text><path d="M23 7l-9 10" stroke="#b36a1e" stroke-width="3"/><path d="M15 16l-3 1-2 5-2 1 6-1 3-3z" fill="#d04fb6"/></svg>
        <div class="mt-[15px] w-9 h-[34px] rounded-[5px] border border-[#cdc8c2] bg-[#e3e4e0] flex items-center justify-center"><svg width="24" height="22" viewBox="0 0 24 22"><path d="M3 1l14 2-3 16-13-2z" fill="#eee" stroke="#999"/><rect x="3" y="4.500" width="20" height="15" fill="#fff" stroke="#8e9192"/><path d="M5 6.500h16V13H5z" fill="#2fa2e6"/><path d="M5 12c5-2 10 1 16-1v6.500H5z" fill="#efbf68"/><circle cx="8.500" cy="15" r="1.500" fill="#d4432a"/></svg></div>
        <svg class="mt-[14px]" width="22" height="22" viewBox="0 0 22 22"><circle cx="11" cy="11" r="9.500" fill="#3c4766" stroke="#9fa2a3" stroke-width="2.600"/><path d="M15 4l-1.500 9-4-3z" fill="#eee"/><path d="M7 18l2.500-8 4 3z" fill="#d4303a"/></svg>
        <svg class="mt-[19px]" width="22" height="22"><use href="#dia"/></svg>
        <svg class="mt-[22px]" width="22" height="20" viewBox="0 0 22 20"><path d="M3 .5h16v3H3z" fill="#fff" stroke="#bbb"/><rect x=".5" y="2.500" width="21" height="17" fill="#f5f3f0" stroke="#a8a8a8"/><path d="M0 2h4v18H0z" fill="#ed7a40"/><path d="M6 6h12M6 10h2M6 13h2M6 16h3" stroke="#999" stroke-dasharray="2 1"/><path d="M15 9a4 4 0 1 0 4 4h-4z" fill="#f4874b"/></svg>
        <svg class="mt-[23px]" width="23" height="17" viewBox="0 0 23 17"><path d="M10 2q6-3 9 0M11 5q6-2 11 0M12 8q6-2 11 0M12 11q5-2 11 0M13 14q4-2 8 0" fill="none" stroke="#a0a3a4" stroke-width="1.800"/><path d="M7.500 1.500l2.200 4.500 5 .7L11 10.200l1 5-4.500-2.400L3 15.200l1-5L.3 6.700l5-.7z" fill="#f6cf58" stroke="#c8952a" stroke-width=".8"/></svg>
        <svg class="mt-[21px]" width="25" height="24"><use href="#master"/></svg>
      </div>
    </aside>
  </div>

  <footer class="h-[23px] shrink-0 border-t border-[#b4b1ae] flex items-center pt-[3px] text-[12.500px] text-[#3b4042] tracking-[-0.350px]">
    <span class="ml-[10px] w-[72px]">Слайд 6 из 7</span><i class="w-px h-4 bg-[#dad7d4]"></i>
    <i class="ml-[427px] w-px h-4 bg-[#dad7d4]"></i><span class="ml-[8px] w-[67px]">Vivid2</span><i class="w-px h-4 bg-[#dad7d4]"></i>
    <svg class="ml-[10px] mr-[7px]" width="13" height="12"><path d="M0 3h5M2.500 0v6" stroke="#ef7c37" stroke-width="1.400"/><path d="M5 3.500h7.500v7h-10V6" fill="none" stroke="#333" stroke-dasharray="1 1"/></svg><span class="w-[84px] tracking-[-0.600px]">1,20 / -13,71</span>
    <svg class="mr-[7px] mt-1" width="14" height="13"><path d="M4 3h9M4 1v4M13 1v4M1 7h3M2.500 7v5M1 12h3" stroke="#ef7c37" stroke-width="1.200"/><path d="M5.500 6.500h8v6h-8z" fill="none" stroke="#333" stroke-dasharray="1 1"/></svg><span class="w-[79px]">0,00 x 0,00</span><i class="w-px h-4 bg-[#dad7d4]"></i>
    <svg class="ml-[8px]" width="12" height="12"><path d="M.5.500h8v9h-8z" fill="#eee" stroke="#999"/><circle cx="7.500" cy="7" r="3.800" fill="#d0323a"/></svg><i class="ml-[2px] w-px h-4 bg-[#dad7d4]"></i>
    <i class="ml-[27px] w-px h-4 bg-[#dad7d4]"></i><span class="ml-[26px] w-[136px] tracking-[-0.600px]">Немецкий (Австрия)</span><i class="w-px h-4 bg-[#dad7d4]"></i>
    <svg class="mx-[5px]" width="12" height="12" viewBox="0 0 12 12" stroke="#3b4042" fill="none" stroke-width="1.200"><path d="M6 1v10M1 6h10M4 2.500l2-2 2 2M4 9.500l2 2 2-2M2.500 4l-2 2 2 2M9.500 4l2 2-2 2"/></svg><i class="w-px h-4 bg-[#dad7d4]"></i>
    <svg class="ml-[8px]" width="118" height="12" viewBox="0 0 118 12" fill="none" stroke="#777a7b" stroke-width="1.200"><circle cx="6" cy="6" r="5"/><path d="M3.500 6h5M17 6h97M63 3.500v5"/><circle cx="41.500" cy="6" r="4.500" fill="#cfd0cf"/></svg><svg width="12" height="12" fill="none" stroke="#666a6b" stroke-width="1.200"><circle cx="6" cy="6" r="5.200"/><path d="M3 6h6M6 3v6"/></svg>
    <i class="ml-[4px] w-px h-4 bg-[#dad7d4]"></i><span class="ml-[8px] tracking-normal">55 %</span>
  </footer>
</section>

<!-- files -->
<section class="absolute left-[119px] top-[213px] w-[890px] h-[550px] rounded-[8px] bg-white overflow-hidden shadow-[0_3px_14px_rgba(0,0,0,.6),0_0_1px_#000] flex flex-col">
  <div class="h-[47px] shrink-0 bg-[linear-gradient(#e3dfdb,#d9d4cf)] border-t border-t-[#f2f0ee] border-b border-b-[#bfb8b1] flex items-center pl-[6px] pb-px text-[#3c4143]">
    <div class="w-[70px] h-8 rounded-[5px] border border-[#cdc7c2] bg-[linear-gradient(#f8f7f6,#eeecea)] flex"><div class="w-[34px] border-r border-[#cdc7c2] flex items-center justify-center"><svg width="9" height="14" fill="none" stroke="#2e3436" stroke-width="2.200"><path d="M8 1L2 7l6 6"/></svg></div><div class="flex-1 flex items-center justify-center bg-[#faf9f8] rounded-r-[5px]"><svg width="9" height="14" fill="none" stroke="#8b8e8f" stroke-width="2.200"><path d="M1 1l6 6-6 6"/></svg></div></div>
    <div class="ml-[7px] w-[531px] h-8 rounded-[5px] border border-[#cdc7c2] bg-[#f5f4f2] flex items-stretch overflow-hidden text-[14.500px] tracking-[-0.550px]">
      <div class="w-[170px] border-r border-[#cdc7c2] bg-[linear-gradient(#f8f7f6,#edebe9)] flex items-center pl-[8px]"><svg class="w-4 h-4 mr-[14px]"><use href="#home"/></svg>Домашняя папка</div>
      <div class="w-[101px] border-r border-[#cdc7c2] bg-[linear-gradient(#f8f7f6,#edebe9)] flex items-center justify-center tracking-[-0.200px]">laboratory</div>
      <div class="w-[95px] border-r border-[#cdc7c2] bg-[linear-gradient(#f8f7f6,#edebe9)] flex items-center pl-4 gap-[16px]">лаба3<svg width="12" height="7" fill="#4a4f51"><path d="M0 0h12L6 7z"/></svg></div>
    </div>
    <div class="ml-[6px] w-[35px] h-8 rounded-[5px] border border-[#cdc7c2] bg-[linear-gradient(#f8f7f6,#edebe9)] flex items-center justify-center"><svg width="16" height="16" fill="none" stroke="#2e3436" stroke-width="2"><circle cx="7" cy="6.500" r="5"/><path d="M10.500 10l4 4.500" stroke-width="2.400"/></svg></div>
    <div class="ml-[79px] w-[60px] h-8 rounded-[5px] border border-[#cdc7c2] bg-[linear-gradient(#f8f7f6,#edebe9)] flex"><div class="w-[35px] border-r border-[#cdc7c2] flex items-center justify-center"><svg width="15" height="14" stroke="#2e3436"><path d="M2 0v14" stroke-width="3.600" stroke-dasharray="3.600 1.500"/><path d="M6 2h9M6 7h9M6 12h9" stroke-width="2"/></svg></div><div class="flex-1 flex items-center justify-center"><svg width="11" height="6" fill="#2e3436"><path d="M0 0h11L5.500 6z"/></svg></div></div>
    <div class="ml-[7px] w-[35px] h-8 rounded-[5px] border border-[#cdc7c2] bg-[linear-gradient(#f8f7f6,#edebe9)] flex items-center justify-center"><svg width="14" height="12" stroke="#2e3436" stroke-width="2"><path d="M0 1h14M0 6h14M0 11h14"/></svg></div>
    <svg class="ml-[26px]" width="9" height="9" stroke="#2e3436" stroke-width="2.400"><path d="M1 1l7 7M8 1l-7 7"/></svg>
  </div>
  <div class="flex-1 flex">
    <aside class="w-[189px] bg-[#fafafa] border-r border-[#cdc7c2] pt-[3px] text-[14.500px] tracking-[-0.480px] text-[#1c1f20]">
      <div class="h-[38px] flex items-center pl-[14px] gap-2"><svg width="16" height="16" fill="none" stroke="#4a4a4a" stroke-width="2"><circle cx="8" cy="8" r="6.500"/><path d="M5 6l3 2.500L12 4.500" stroke-width="1.300"/></svg>Недавние</div>
      <div class="h-[38px] flex items-center pl-[14px] gap-2"><svg width="16" height="16" fill="#4a4a4a"><path d="M8 .8l2 5.200h5.500L11.200 9.400l1.600 5.400L8 11.600l-4.800 3.200 1.600-5.400L.5 6H6z"/></svg>Избранные</div>
      <div class="h-[38px] flex items-center pl-[14px] gap-2"><svg class="w-4 h-4"><use href="#home"/></svg>Домашняя папка</div>
      <div class="h-[38px] flex items-center pl-[14px] gap-2"><svg width="16" height="16" fill="#4a4a4a"><rect x="5" y="4" width="10" height="9" rx="1"/><path d="M1 4.500L4 8.500 1 12.500z"/></svg>Видео</div>
      <div class="h-[38px] flex items-center pl-[14px] gap-2"><svg width="16" height="16" fill="none" stroke="#4a4a4a" stroke-width="2"><path d="M3 2h6.500L13 5.500V14H3z"/><path d="M9 2v4h4" stroke-width="1.400"/></svg>Документы</div>
      <div class="h-[38px] flex items-center pl-[14px] gap-2"><svg width="16" height="16" fill="none" stroke="#4a4a4a" stroke-width="2.200"><path d="M8 1v12M2.500 8L8 13.500 13.500 8"/></svg>Загрузки</div>
      <div class="h-[38px] flex items-center pl-[14px] gap-2"><svg width="16" height="16"><path d="M1 4h3l1.500-2h5L12 4h3v10H1z" fill="#4a4a4a"/><circle cx="8" cy="8.500" r="2.800" fill="none" stroke="#fafafa" stroke-width="1.800"/></svg>Изображения</div>
      <div class="h-[38px] flex items-center pl-[14px] gap-2"><svg width="16" height="16" fill="none" stroke="#4a4a4a" stroke-width="2"><circle cx="3" cy="12" r="2"/><circle cx="11.500" cy="11.500" r="2.200"/><path d="M5 12V7h3M7 10V2h7v10"/></svg>Музыка</div>
      <div class="h-[38px] flex items-center pl-[14px] gap-2"><svg width="16" height="16" fill="none" stroke="#4a4a4a" stroke-width="1.900"><path d="M1 4V3h14v1M4 2V1h8v1M2 5.500v5.500q0 4 4 4h4q4 0 4-4V5.500"/><path d="M8 6v7M5 6.500q2 3 0 6M11 6.500q-2 3 0 6" stroke-width="1.100"/></svg>Корзина</div>
      <div class="mt-[4px] border-t border-[#dcd9d6]"></div>
      <div class="h-[38px] mt-[4px] flex items-center pl-[14px] gap-2"><svg width="16" height="16" stroke="#4a4a4a" stroke-width="2"><path d="M8 1v14M1 8h14"/></svg>Другие места</div>
    </aside>
    <div class="flex-1 pl-[6px] pt-[18px] grid grid-cols-[172px_172px_172px_172px] auto-rows-[163px] text-[14.500px] leading-[19px] tracking-[-0.500px] text-center text-[#1c1f20]">
      <div class="flex flex-col items-center"><svg class="w-[68px] h-[86px] mb-[5px]"><use href="#txt"/></svg>Makefile</div>
      <div class="flex flex-col items-center"><svg class="w-[68px] h-[86px] mb-[5px]"><use href="#txt"/></svg>README.md</div>
      <div class="flex flex-col items-center"><svg class="w-[68px] h-[86px] mb-[5px]" viewBox="0 0 68 86"><use href="#file"/><path d="M12 14.500h29M12 22h29M12 30h45M46 37.500h11M46 45h11M46 52.500h11M46 60h11M46 67.500h11" stroke="#d5d4d2" stroke-width="3"/><rect x="12" y="35" width="32" height="38" fill="url(#doc)"/></svg>report03.docx</div>
      <div class="flex flex-col items-center"><svg class="w-[68px] h-[86px] mb-[5px]"><use href="#txt"/></svg>report03.md</div>
      <div class="flex flex-col items-center pt-[18px]"><div class="w-[128px] h-[72px] mb-px border border-[#b5b5ad] rounded-[3px] bg-[#fdfdfd] text-left pl-[6px] pt-[5px]"><div class="text-[8.500px] leading-[8px] text-[#7db3c8] tracking-normal">Вывод</div><div class="mt-[5px] flex text-[4.500px] leading-[4.700px] tracking-[-0.150px] text-[#222]"><span class="w-[6px] text-[#5aa7c0]">•</span><p>Я научился работать с Markdown, создавать pdf и<br>docx файлы из файла Markdown (с помощью<br>команды make) и сделала отчёт по предыдущей<br>лабораторной работе в формате Markdown.</p></div></div>Без имени 1.odp</div>
      <div class="flex flex-col items-center"><svg class="w-[68px] h-[86px] mb-[5px]"><use href="#txt"/></svg>.~lock.Без имени 1.<br>odp#</div>
    </div>
  </div>
</section>

<script>
const icon = (id, w) => `<span class="w-8 h-[34px] shrink-0 flex items-center justify-center"${w ? ` style="width:${w}px"` : ''}><svg class="w-6 h-6"><use href="#${id}"/></svg></span>`;
function toolbar(el, spec) {
  document.getElementById(el).innerHTML = spec.split(' ').map(t => {
    const [n, w] = t.split(':');
    if (n === 'v') return '<span class="w-[12.5px] h-[34px] shrink-0 flex items-center justify-center pt-1"><svg width="7" height="5"><path d="M0 0h7L3.500 5z" fill="#111"/></svg></span>';
    if (n === 'x') return '<span class="w-[12.5px] h-[34px] shrink-0 flex items-center justify-center pt-1"><svg width="7" height="5"><path d="M0 0h7L3.500 5z" fill="#aaa"/></svg></span>';
    if (n === '|') return `<span class="w-[9px] h-[33px] shrink-0 flex justify-center"${w ? ` style="width:${w}px"` : ''}><i class="w-px h-full bg-[#d9d6d3]"></i></span>`;
    if (n === '_') return '<span class="w-2 shrink-0"></span>';
    if (n === '>>') return '<span class="ml-[15px] text-[20px] text-[#777] leading-none pb-1">»</span>';
    if (n === 'view') return '<span class="w-[39px] shrink-0 flex items-center justify-center"><svg class="w-[30px] h-6"><use href="#view"/></svg></span>';
    if (n === 'pointer' || n === 'draw') return `<span class="w-8 h-[34px] shrink-0 rounded-[5px] border border-[#c9c3bd] bg-[#d6d1cc] flex items-center justify-center"><svg class="w-6 h-6"><use href="#${n}"/></svg></span>`;
    return icon(n, w);
  }).join('');
}
toolbar('tb1', 'new v open v save v | pdf print | cut copy paste v | brush | undo v redo x | find spell | dots view v master:34 | play pause | table v image media:34 chart | textbox omega x fontwork link:34 draw _ newslide v dup del:34 | >>');
toolbar('tb2', 'pointer fit:35 |:7 lines v fill v |:8 line:33 rect:33 ell |:9 arrowl v curve v conn v |:7 dia v smile v dbl v flow v call v star v cube v |:7 rot align x arr2 x dist x |:7 shadow crop filter x |:7 points:34 glue:34 extr');

const slides = [
  ['Отчет по<br>лабораторной<br>№3', ''],
  ['Цель работы', 'Научиться работать<br>docx файлы<br>команды make'],
  ['Работа с', '&nbsp; &nbsp; Так как в<br>лабораторной<br>моменты в'],
  ['Оформление', '&nbsp; &nbsp; Расписываю<br>прошлой раб<br>указываю<br>изображения'],
  ['Выполнение', '&nbsp; По отчёту<br>в Markdown'],
  ['Создание', 'С помощью<br>дополнительно<br>docx'],
  ['Вывод', 'Я научился работать с Markdown, создавать pdf и<br>docx файлы из файла Markdown (с помощью<br>команды make) и сделала отчёт по предыдущей<br>лабораторной работе в формате Markdown.']
];
document.getElementById('slides').innerHTML = slides.map(([t, b], i) => {
  const sel = i === 5;
  const row = sel
    ? 'w-[156px] h-[81px] pt-[4px] flex bg-[linear-gradient(#8aa6cc,#a5c2ea)] outline outline-[#5f7ea8] -outline-offset-1'
    : 'w-[156px] h-[81px] pt-[4px] flex';
  const num = sel ? 'w-[25px] pr-[5px] text-right text-[15px] font-bold text-[#444] pt-[1px]' : 'w-[25px] pr-[5px] text-right text-[15px] font-semibold text-[#888] pt-[1px]';
  const bullet = i === 1 || i > 4 ? '<span class="w-[4px] -ml-[4px] text-[#1590cc]">•</span>' : '';
  let inner;
  if (i === 0) inner = `<div class="h-[46px] pl-[6px] pt-[11px] text-[9.500px] leading-[11px] text-[#4f9dba] overflow-hidden">${t}</div><div class="flex-1 border-t border-[#f0a020] pl-[6px] pt-[3px] text-[4.500px] leading-[5px] font-bold text-white bg-[#0a86cc] bg-[repeating-linear-gradient(0deg,#2a66a888_0_1px,transparent_1px_4px),repeating-linear-gradient(90deg,#2a66a888_0_1px,transparent_1px_4px)]">Старикова Е.<br>НПМбд-02-21</div>`;
  else if (i === 1) inner = `<div class="h-[14px] border-b border-dashed border-[#f0c060] pl-[6px] pt-[5px] text-[7.500px] leading-[8px] text-[#8ad0f4] bg-[#0a86cc] bg-[repeating-linear-gradient(0deg,#2a66a888_0_1px,transparent_1px_4px),repeating-linear-gradient(90deg,#2a66a888_0_1px,transparent_1px_4px)]">${t}</div><div class="flex pl-[12px] pt-[4px] text-[4.500px] leading-[4.700px] text-[#222]">${bullet}<p>${b}</p></div>`;
  else inner = `<div class="h-[3px] shrink-0 border-b border-dashed border-[#e8b860] bg-[#1590cc]"></div><div class="pl-[7px] pt-[3px] text-[7px] leading-[8px] text-[#5aa7c0]">${t}</div><div class="flex-1 flex pl-[12px] pt-[4px] text-[4.500px] leading-[4.600px] tracking-[-0.100px] text-[#222]">${bullet}<p>${b}</p></div><div class="h-[3px] border-b border-dashed border-[#8a9aa0] bg-[#1590cc]"></div>`;
  return `<div class="${row}"><div class="${num}">${i + 1}</div><div class="w-[127px] h-[73px] border border-[#777] bg-white shadow-[1px_2px_2px_rgba(0,0,0,.3)] flex flex-col overflow-hidden">${inner}</div></div>`;
}).join('');

const T = (x, y, s, n) => `<text x="${x}" y="${y}" font-size="${n || 10}" text-anchor="middle" fill="#111" font-family="Liberation Sans">${s}</text>`;
const box = (a, r) => `<rect x="1.500" y="14.500" width="78" height="51" rx="5" fill="#fff" ${a}/>${r || ''}`;
const note = '<path d="M17.500 12.500h28l18 18v37h-46z" fill="#fff" stroke="#222"/><path d="M45.500 12.500v18h18" fill="none" stroke="#111"/>';
const rows = [
  ['<circle cx="40" cy="40" r="23" fill="#fff" stroke="#000"/>', '<circle cx="40" cy="40" r="23.500" fill="#fff" stroke="#000" stroke-width="1.200"/><circle cx="40" cy="40" r="20.500" fill="none" stroke="#000" stroke-width="1.200"/>', '<circle cx="40" cy="40" r="23.500" fill="#fff" stroke="#000" stroke-width="4.500"/>'],
  [box('stroke="#222"'), box('stroke="#444" stroke-width="1.200"', '<rect x="4" y="17" width="73" height="46" rx="4" fill="none" stroke="#666" stroke-width=".8"/>' + T(41, 43, 'Transaction')), box('stroke="#000" stroke-width="2"', T(40, 43, 'Call Activity'))],
  [box('stroke="#222"'), box('stroke="#555" stroke-dasharray="1 2"', T(40, 38, 'Event-') + T(39, 49, 'Sub-Process')), box('stroke="#444" stroke-width="1.300" stroke-dasharray="10 3 2 3"', T(40, 43, 'Group'))],
  [note, note + '<path d="M20 18h10v-4l8 9-8 9v-4H20z" fill="#ddd" stroke="#111"/>', note + '<path d="M20 19h9v-5l10 9-10 8v-5h-9z" fill="#000"/>'],
  ['<path d="M7.500 20v42c0 9 65 9 65 0V20" fill="#fff" stroke="#111"/>', '<rect x="27.500" y="31.500" width="25" height="16" fill="#fff" stroke="#333"/><path d="M28 32l12 6 12-6" fill="none" stroke="#333"/><path d="M53 39h21M74 36.500l6 2.500-6 2.500z" fill="#fff" stroke="#999" stroke-width=".8"/>', '<rect x="23.500" y=".5" width="33" height="22" rx="2.500" fill="#fff" stroke="#888"/><rect x="23.500" y="57.500" width="33" height="22" rx="2.500" fill="#fff" stroke="#888"/>' + T(40, 14, 'Task', 4.5) + T(40, 71, 'Task', 4.5) + '<text x="40" y="42" font-size="4" text-anchor="middle" fill="#888">Message</text>'],
  ['<path d="M40 16.500L63.500 40 40 63.500 16.500 40z" fill="#fff" stroke="#000"/>', '<path d="M40 16.500L63.500 40 40 63.500 16.500 40z" fill="#fff" stroke="#000"/><path d="M30 30l20 20M50 30L30 50" stroke="#000" stroke-width="4"/>', '<path d="M40 16.500L63.500 40 40 63.500 16.500 40z" fill="#fff" stroke="#000"/><circle cx="40" cy="40" r="12" fill="#fff" stroke="#000" stroke-width="4.500"/>']
];
document.getElementById('cells').innerHTML = rows.flat().map(s => `<svg class="w-[81px] h-[81px] bg-[length:16px_16px] bg-[repeating-conic-gradient(#efefef_0%_25%,#ffffff_25%_50%)]" viewBox="0 0 81 81">${s}</svg>`).join('');
</script>
</body>
</html>
